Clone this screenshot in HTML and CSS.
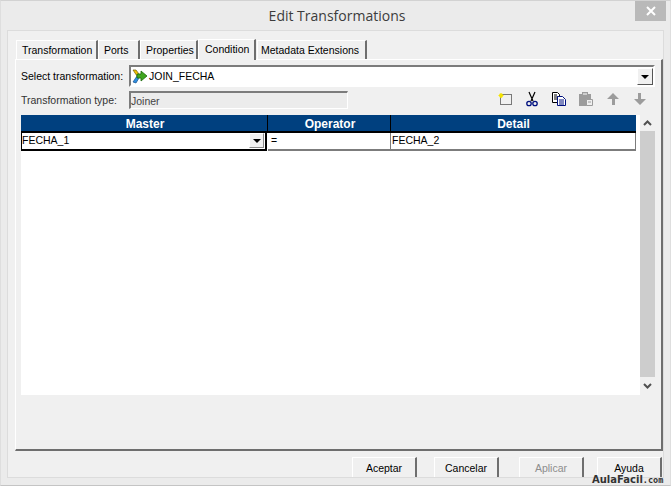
FILE: index.html
```html
<!DOCTYPE html>
<html lang="en">
<head>
  <meta charset="UTF-8">
  <title>Edit Transformations</title>
  <link rel="stylesheet" href="styles.css">
</head>
<body>
  <div class="window">
    <div class="titlebar">
      <span class="title">Edit Transformations</span>
      <button class="close-btn">
        <svg width="10" height="10" viewBox="0 0 10 10"><path d="M1 1L9 9M9 1L1 9" stroke="#fff" stroke-width="2"/></svg>
      </button>
    </div>

    <div class="client">
      <div class="tabs">
        <div class="tab tab-transformation">Transformation</div>
        <div class="tab tab-ports">Ports</div>
        <div class="tab tab-properties">Properties</div>
        <div class="tab tab-condition">Condition</div>
        <div class="tab tab-metadata">Metadata Extensions</div>
      </div>

      <div class="pane">
        <div class="select-row">
          <label class="field-label">Select transformation:</label>
          <div class="combo">
            <svg class="joiner-icon" width="16" height="16" viewBox="0 0 16 16">
              <path d="M1 2h3l3 4-2 2z" fill="#f2c200" stroke="#6b5a10" stroke-width=".7"/>
              <path d="M1 14l4-6 2 2-3 5z" fill="#2f8fe0" stroke="#15508f" stroke-width=".7"/>
              <path d="M5 6h4V3l6 5-6 5v-3H5z" fill="#3fa51f" stroke="#1d6b0c" stroke-width=".8"/>
            </svg>
            <span class="combo-text">JOIN_FECHA</span>
            <button class="drop-btn"><span class="arrow"></span></button>
          </div>
        </div>

        <div class="type-row">
          <label class="field-label">Transformation type:</label>
          <div class="type-value">Joiner</div>
          <div class="toolbar">
            <svg width="16" height="16" viewBox="0 0 16 16">
              <rect x="3.500" y="3.500" width="11" height="10" fill="none" stroke="#000" stroke-dasharray="1 1"/>
              <path d="M4 2v5M1.500 4.500h5M2.500 3l3 3M5.500 3l-3 3" stroke="#f4e300" stroke-width="1.200"/>
            </svg>
            <svg width="16" height="16" viewBox="0 0 16 16">
              <path d="M5 1l4 9M11 1L7 10" stroke="#000" stroke-width="1.200" fill="none"/>
              <circle cx="5" cy="12.500" r="2.200" fill="none" stroke="#00107f" stroke-width="1.300"/>
              <circle cx="11" cy="12.500" r="2.200" fill="none" stroke="#00107f" stroke-width="1.300"/>
            </svg>
            <svg width="16" height="16" viewBox="0 0 16 16">
              <path d="M1.500 1.500h5l2 2v2h-2v6h-5z" fill="#fff" stroke="#000"/>
              <path d="M3 4h3M3 6h3M3 8h3" stroke="#000"/>
              <path d="M6.500 5.500h5l3 3v6h-8z" fill="#fff" stroke="#00107f"/>
              <path d="M8 9h5M8 11h5M8 13h5" stroke="#00107f"/>
            </svg>
            <svg width="16" height="16" viewBox="0 0 16 16">
              <path d="M1 3h3V1h6v2h3v6H9v6H1z" fill="#9c9c9c"/>
              <path d="M5 3h4" stroke="#fff"/>
              <path d="M8.500 8.500h6v6h-6z" fill="#efefef" stroke="#9c9c9c"/>
              <path d="M10 11h3" stroke="#9c9c9c"/>
            </svg>
            <svg width="16" height="16" viewBox="0 0 16 16"><path d="M8 2l6 6h-4v6H7V8H2z" fill="#9c9c9c"/></svg>
            <svg width="16" height="16" viewBox="0 0 16 16"><path d="M9 2v6h5l-6 6-6-6h4V2z" fill="#9c9c9c"/></svg>
          </div>
        </div>

        <div class="grid">
          <div class="grid-body">
            <div class="grid-head">
              <div class="head-cell">Master</div>
              <div class="head-cell">Operator</div>
              <div class="head-cell">Detail</div>
            </div>
            <div class="grid-row">
              <div class="cell cell-active">
                <span>FECHA_1</span>
                <button class="drop-btn cell-drop"><span class="arrow"></span></button>
              </div>
              <div class="cell cell-operator">=</div>
              <div class="cell cell-detail">FECHA_2</div>
            </div>
          </div>
          <div class="scrollbar">
            <svg class="scroll-arrow" width="15" height="16" viewBox="0 0 15 16"><path d="M4 10l3.500-3.500L11 10" fill="none" stroke="#505050" stroke-width="2"/></svg>
            <div class="scroll-thumb"></div>
            <svg class="scroll-arrow" width="15" height="18" viewBox="0 0 15 18"><path d="M4 7l3.500 3.500L11 7" fill="none" stroke="#505050" stroke-width="2"/></svg>
          </div>
        </div>
      </div>

      <div class="footer">
        <button class="btn">Aceptar</button>
        <button class="btn btn-cancel">Cancelar</button>
        <button class="btn btn-apply">Aplicar</button>
        <button class="btn btn-help">Ayuda</button>
      </div>
    </div>
  </div>
  <div class="watermark">AulaFacil<span class="watermark-com">.com</span></div>
</body>
</html>
```

FILE: styles.css
```css
* {
  box-sizing: border-box;
  margin: 0;
  padding: 0;
}

html, body {
  width: 671px;
  height: 486px;
  overflow: hidden;
}

body {
  position: relative;
  font-family: "Liberation Sans", Arial, sans-serif;
  font-size: 10.5px;
  color: #000;
  background-color: #ebebeb;
}

button {
  font: inherit;
  color: inherit;
}

.window {
  height: 486px;
  border-top: 1px solid #d2d2d2;
  border-bottom: 1px solid #c4c4c4;
  border-left: 1px solid #dedede;
  border-right: 1px solid #dedede;
}

.titlebar {
  position: relative;
  height: 29px;
  display: flex;
  align-items: center;
  justify-content: center;
}

.title {
  font-family: "Open Sans", sans-serif;
  font-size: 14px;
  color: #3c3c3c;
  margin: 0 0 1px 3px;
}

.close-btn {
  position: absolute;
  top: 0;
  right: 4px;
  width: 31px;
  height: 20px;
  border: none;
  background-color: #b9b9b9;
  display: flex;
  align-items: center;
  justify-content: center;
}

.client {
  height: 448px;
  margin: 0 6px;
  padding: 7px 0 0 7px;
  background-color: #f0f0f0;
  border: 1px solid #dcdcdc;
  overflow: hidden;
}

/* Tabs */
.tabs {
  display: flex;
  height: 21px;
  padding-left: 1px;
  align-items: flex-end;
}

.tab {
  height: 19px;
  padding: 3px 0 0 5px;
  background-color: #f0f0f0;
  border-top: 1px solid #fff;
  border-left: 1px solid #fff;
  border-right: 2px solid #6e6e6e;
  white-space: nowrap;
}

.tab-transformation { width: 82px; }
.tab-ports { width: 42px; }
.tab-properties { width: 58px; }
.tab-metadata { width: 110px; margin-left: 1px; padding-left: 3px; }

.tab-condition {
  width: 58px;
  height: 21px;
  padding: 3px 0 0 6px;
  position: relative;
  margin-bottom: -1px;
}

.pane {
  width: 648px;
  height: 392px;
  padding: 5px 6px 0 5px;
  border-top: 1px solid #fff;
  border-left: 1px solid #fff;
  border-right: 2px solid #6e6e6e;
  border-bottom: 2px solid #6e6e6e;
}

.select-row,
.type-row {
  display: flex;
  align-items: center;
}

.field-label {
  width: 108px;
  white-space: nowrap;
}

.type-row .field-label {
  color: #333;
}

.combo {
  position: relative;
  width: 526px;
  height: 22px;
  display: flex;
  align-items: center;
  padding-left: 1px;
  background-color: #fff;
  border: 2px solid #7c7c7c;
  border-right-color: #fff;
  border-bottom-color: #fff;
}

.joiner-icon {
  flex: none;
}

.combo-text {
  margin-left: 1px;
}

.drop-btn {
  width: 16px;
  height: 17px;
  border: 1px solid #fff;
  border-right-color: #555;
  border-bottom-color: #555;
  background-color: #f0f0f0;
  display: flex;
  align-items: center;
  justify-content: center;
}

.combo .drop-btn {
  position: absolute;
  right: 0;
  top: 1px;
}

.arrow {
  width: 0;
  height: 0;
  border-left: 4px solid transparent;
  border-right: 4px solid transparent;
  border-top: 4px solid #000;
}

.type-row {
  height: 17px;
  margin-top: 4px;
}

.type-value {
  width: 219px;
  height: 18px;
  padding: 2px 0 0 0;
  color: #444;
  background-color: #ececec;
  border: 1px solid #fff;
  border-top: 2px solid #7c7c7c;
  border-left: 2px solid #7c7c7c;
}

.toolbar {
  display: flex;
  gap: 11px;
  margin: 0 0 2px 149px;
}

.toolbar svg {
  flex: none;
}

/* Grid */
.grid {
  display: flex;
  width: 634px;
  height: 280px;
  margin-top: 7px;
}

.grid-body {
  width: 619px;
  background-color: #fff;
}

.grid-head {
  display: grid;
  grid-template-columns: 247px 123px 245px;
  width: 615px;
  height: 18px;
  background-color: #00407f;
  border-bottom: 2px solid #000;
}

.head-cell {
  padding: 2px 0 0 2px;
  font-size: 12px;
  font-weight: bold;
  text-align: center;
  color: #fff;
  border-right: 1px solid #000;
}

.head-cell:last-child {
  padding-left: 0;
  border-right: none;
}

.grid-row {
  display: grid;
  grid-template-columns: 247px 123px 245px;
  height: 18px;
}

.cell {
  padding: 1px 0 0 3px;
  border-bottom: 2px solid #7c7c7c;
  border-right: 1px solid #7c7c7c;
  white-space: nowrap;
}

.cell-active {
  position: relative;
  margin-right: 1px;
  padding-left: 0;
  border: 2px solid #000;
  border-top: none;
  border-left: 1px solid #000;
}

.cell-drop {
  position: absolute;
  top: 0;
  right: 1px;
  width: 15px;
  height: 15px;
  border-right-color: #8a8a8a;
  border-bottom-color: #8a8a8a;
}

.cell-detail {
  padding-left: 1px;
  border-right: 1px solid #7c7c7c;
}

.scrollbar {
  width: 15px;
  display: flex;
  flex-direction: column;
  background-color: #f0f0f0;
}

.scroll-thumb {
  flex: 1;
  background-color: #cdcdcd;
}

.scroll-arrow {
  flex: none;
}

/* Buttons */
.footer {
  display: flex;
  padding: 6px 0 0 337px;
}

.btn {
  flex: none;
  width: 65px;
  height: 22px;
  background-color: #f0f0f0;
  border: none;
  border-top: 1px solid #fff;
  border-left: 1px solid #fff;
  border-right: 2px solid #6e6e6e;
  padding-bottom: 1px;
}

.btn-cancel { margin-left: 17px; }
.btn-apply { margin-left: 20px; color: #8d8d8d; }
.btn-help { margin-left: 13px; }

.watermark {
  position: absolute;
  left: 592px;
  top: 474px;
  font-family: "DejaVu Sans", sans-serif;
  font-size: 10px;
  line-height: 12px;
  font-weight: bold;
  color: #333;
  white-space: nowrap;
}

.watermark-com {
  font-family: "DejaVu Sans Mono", monospace;
  font-size: 8.500px;
}
```
